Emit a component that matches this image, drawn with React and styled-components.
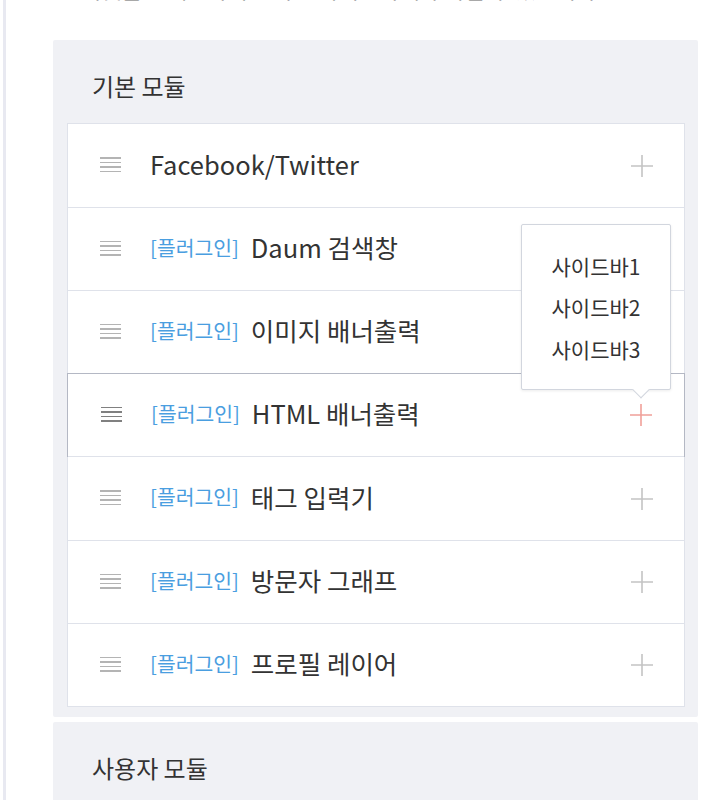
import React from "react";
import styled, { createGlobalStyle } from "styled-components";

const Global = createGlobalStyle`
  html, body { margin: 0; padding: 0; background: #fff; }
  *, *::before, *::after { box-sizing: border-box; }
  body { font-family: "Noto Sans CJK KR", "Noto Sans", sans-serif; color: #333; overflow: hidden; }
`;

const Page = styled.div`
  margin-left: 3px;
  border-left: 3px solid #e8e9f1;
  padding: 0 24px 0 47px;
  min-height: 800px;
`;

const Intro = styled.p`
  margin: -28px 0 36px 28px;
  font-size: 22px;
  line-height: 32px;
  color: #666;
  white-space: nowrap;
`;

const Panel = styled.section`
  background: #f0f1f5;
  border-radius: 2px;
  padding: 0 13px 10px 14px;
  & + & {
    margin-top: 5px;
  }
`;

const PanelTitle = styled.h2`
  margin: 0;
  height: 83px;
  display: flex;
  align-items: center;
  padding: 7px 0 0 25px;
  font-size: 24px;
  font-weight: 400;
  color: #333;
`;

const List = styled.ul`
  list-style: none;
  margin: 0;
  padding: 0;
  background: #fff;
  border: 1px solid #dfe2ea;
`;

const Row = styled.li`
  position: relative;
  display: flex;
  align-items: center;
  height: 83px;
  padding: 0 32px;
  border-top: 1px solid #dfe2ea;
  &:first-child {
    border-top: none;
  }
  &:nth-child(5) {
    height: 84px;
  }
  ${(p) =>
    p.$active &&
    `
    border: 1px solid #b4b8c4;
    height: 84px;
    margin: 0 -1px -1px;
    padding: 0 33px;
  `}
`;

const Handle = styled.span`
  display: flex;
  flex-direction: column;
  gap: 3px;
  width: 21px;
  margin: 0 29px 2px 0;
  span {
    display: block;
    height: 1.5px;
    background: ${(p) => (p.$active ? "#808080" : "#b4b4b4")};
  }
`;

const Prefix = styled.span`
  font-size: 20.4px;
  color: #4a9ee0;
  margin: 0 12px 5px 0;
`;

const Name = styled.span`
  font-size: 25.5px;
  color: #333;
  flex: 1;
  margin-bottom: 5px;
`;

const PlusBtn = styled.button`
  width: 24px;
  height: 24px;
  border: 0;
  background: none;
  padding: 0;
  display: flex;
  align-items: center;
  justify-content: center;
  margin-right: -2px;
  color: ${(p) => (p.$active ? "#f0a099" : "#c4c4c4")};
`;

const Menu = styled.ul`
  position: absolute;
  right: 13px;
  bottom: 66px;
  width: 150px;
  margin: 0;
  padding: 21px 0 19px;
  list-style: none;
  background: #fff;
  border: 1px solid #d2d6de;
  border-radius: 2px;
  box-shadow: 0 1px 3px rgba(0, 0, 0, 0.08);
  z-index: 2;
  &::after {
    content: "";
    position: absolute;
    right: 23px;
    bottom: -7px;
    width: 12px;
    height: 12px;
    background: #fff;
    border-right: 1px solid #d2d6de;
    border-bottom: 1px solid #d2d6de;
    transform: rotate(45deg);
  }
`;

const MenuItem = styled.li`
  text-align: center;
  font-size: 21px;
  line-height: 41.5px;
  color: #333;
`;

const Plus = () => (
  <svg width="22" height="22" viewBox="0 0 22 22" fill="none" stroke="currentColor" strokeWidth="1.6">
    <path d="M11 0v22M0 11h22" />
  </svg>
);

const basic = [
  { name: "Facebook/Twitter" },
  { prefix: "[플러그인]", name: "Daum 검색창" },
  { prefix: "[플러그인]", name: "이미지 배너출력" },
  { prefix: "[플러그인]", name: "HTML 배너출력", active: true },
  { prefix: "[플러그인]", name: "태그 입력기" },
  { prefix: "[플러그인]", name: "방문자 그래프" },
  { prefix: "[플러그인]", name: "프로필 레이어" },
];

export default function App() {
  return (
    <>
      <Global />
      <Page>
        <Intro>위젯을 드래그하여 원하는 사이드바에 추가할 수 있습니다.</Intro>
        <Panel>
          <PanelTitle>기본 모듈</PanelTitle>
          <List>
            {basic.map((m) => (
              <Row key={m.name} $active={m.active}>
                <Handle $active={m.active}>
                  <span />
                  <span />
                  <span />
                  <span />
                </Handle>
                {m.prefix && <Prefix>{m.prefix}</Prefix>}
                <Name>{m.name}</Name>
                <PlusBtn $active={m.active} aria-label="추가">
                  <Plus />
                </PlusBtn>
                {m.active && (
                  <Menu>
                    <MenuItem>사이드바1</MenuItem>
                    <MenuItem>사이드바2</MenuItem>
                    <MenuItem>사이드바3</MenuItem>
                  </Menu>
                )}
              </Row>
            ))}
          </List>
        </Panel>
        <Panel>
          <PanelTitle>사용자 모듈</PanelTitle>
        </Panel>
      </Page>
    </>
  );
}
